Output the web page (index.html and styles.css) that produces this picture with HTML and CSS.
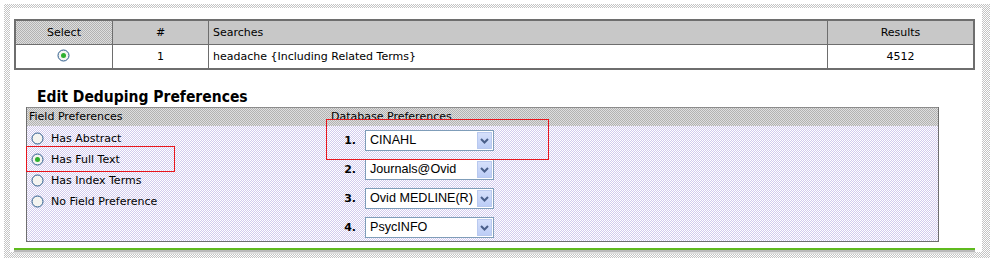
FILE: index.html
```html
<!DOCTYPE html>
<html lang="en">
<head>
  <meta charset="UTF-8">
  <title>Edit Deduping Preferences</title>
  <link rel="stylesheet" href="styles.css">
</head>
<body>
  <div class="page">
    <div class="panel">
      <table class="searches">
        <thead>
          <tr>
            <th class="col-select">Select</th>
            <th class="col-num">#</th>
            <th class="col-search">Searches</th>
            <th class="col-results">Results</th>
          </tr>
        </thead>
        <tbody>
          <tr>
            <td class="center">
              <svg class="radio" width="13" height="13" viewBox="0 0 13 13"><circle cx="6.5" cy="6.5" r="5.5" fill="#f4f4f0" stroke="#2a5a8c"/><circle cx="6.5" cy="6.5" r="2.5" fill="#2fb02f"/></svg>
            </td>
            <td class="center">1</td>
            <td>headache {Including Related Terms}</td>
            <td class="center">4512</td>
          </tr>
        </tbody>
      </table>

      <h2 class="title">Edit Deduping Preferences</h2>

      <div class="prefs">
        <div class="prefs-head">
          <span class="head-field">Field Preferences</span>
          <span class="head-db">Database Preferences</span>
        </div>
        <div class="prefs-body">
          <ul class="field-list">
            <li><svg class="radio" width="13" height="13" viewBox="0 0 13 13"><circle cx="6.5" cy="6.5" r="5.5" fill="#f4f4f0" stroke="#2a5a8c"/></svg>Has Abstract</li>
            <li><svg class="radio" width="13" height="13" viewBox="0 0 13 13"><circle cx="6.5" cy="6.5" r="5.5" fill="#f4f4f0" stroke="#2a5a8c"/><circle cx="6.5" cy="6.5" r="2.5" fill="#2fb02f"/></svg>Has Full Text</li>
            <li><svg class="radio" width="13" height="13" viewBox="0 0 13 13"><circle cx="6.5" cy="6.5" r="5.5" fill="#f4f4f0" stroke="#2a5a8c"/></svg>Has Index Terms</li>
            <li><svg class="radio" width="13" height="13" viewBox="0 0 13 13"><circle cx="6.5" cy="6.5" r="5.5" fill="#f4f4f0" stroke="#2a5a8c"/></svg>No Field Preference</li>
          </ul>
          <ol class="db-list">
            <li><span class="num">1.</span><div class="dd"><span class="dd-text">CINAHL</span><span class="dd-btn"><svg width="9" height="6" viewBox="0 0 9 6"><polyline points="1,1 4.5,4.5 8,1" fill="none" stroke="#4a5f8a" stroke-width="2"/></svg></span></div></li>
            <li><span class="num">2.</span><div class="dd"><span class="dd-text">Journals@Ovid</span><span class="dd-btn"><svg width="9" height="6" viewBox="0 0 9 6"><polyline points="1,1 4.5,4.5 8,1" fill="none" stroke="#4a5f8a" stroke-width="2"/></svg></span></div></li>
            <li><span class="num">3.</span><div class="dd"><span class="dd-text">Ovid MEDLINE(R)</span><span class="dd-btn"><svg width="9" height="6" viewBox="0 0 9 6"><polyline points="1,1 4.5,4.5 8,1" fill="none" stroke="#4a5f8a" stroke-width="2"/></svg></span></div></li>
            <li><span class="num">4.</span><div class="dd"><span class="dd-text">PsycINFO</span><span class="dd-btn"><svg width="9" height="6" viewBox="0 0 9 6"><polyline points="1,1 4.5,4.5 8,1" fill="none" stroke="#4a5f8a" stroke-width="2"/></svg></span></div></li>
          </ol>
        </div>
      </div>

      <div class="rule"></div>

      <div class="mark mark-field"></div>
      <div class="mark mark-db"></div>
    </div>
  </div>
</body>
</html>
```

FILE: styles.css
```css
:root {
  --ink: #000;
  --line: #6e6e6e;
  --gray-a: #b2b2b2;
  --gray-b: #dedede;
  --lav-a: #d2cbee;
  --lav-b: #ffffff;
  --mark: #e8161c;
}

body {
  margin: 0;
  background: #fff;
  font-family: "DejaVu Sans", Verdana, sans-serif;
  font-size: 11px;
  color: var(--ink);
}

.page {
  margin: 4px 0 0 4px;
  width: 986px;
  height: 254px;
  padding: 4px 0 0 6px;
  box-sizing: border-box;
  background: repeating-conic-gradient(#c4c4c4 0 25%, #fff 0 50%) 0 0 / 2px 2px;
}

.panel {
  position: relative;
  width: 972px;
  height: 244px;
  background: #fff;
  padding: 11px 0 0 4px;
  box-sizing: border-box;
}

/* searches table */
.searches {
  width: 961px;
  border-collapse: collapse;
  border: 2px solid var(--line);
}

.searches th,
.searches td {
  border: 1px solid var(--line);
  padding: 0 4px;
  text-align: left;
  font-weight: normal;
}

.searches th {
  height: 23px;
  text-align: center;
  background: repeating-conic-gradient(var(--gray-a) 0 25%, var(--gray-b) 0 50%) 0 0 / 2px 2px;
}

.searches th.col-search {
  text-align: left;
}

.searches td {
  height: 23px;
}

.col-select { width: 88px; }
.col-num { width: 87px; }
.col-results { width: 137px; }

.center {
  text-align: center !important;
}

.radio {
  display: block;
  flex: none;
}

.searches td .radio {
  display: inline-block;
  vertical-align: middle;
  margin: -3px 0 0 -1px;
}

/* heading */
.title {
  margin: 0;
  padding: 17px 0 0 23px;
  height: 20px;
  font-family: "DejaVu Sans Condensed", "DejaVu Sans", sans-serif;
  font-size: 15.5px;
  line-height: 20px;
  font-weight: bold;
}

/* preferences box */
.prefs {
  margin: 0 0 0 12px;
  width: 913px;
  height: 135px;
  box-sizing: border-box;
  border: 1px solid var(--line);
  border-top: none;
  background: repeating-conic-gradient(var(--lav-a) 0 25%, var(--lav-b) 0 50%) 0 0 / 2px 2px;
}

.prefs-head {
  display: flex;
  height: 18px;
  line-height: 18px;
  background: repeating-conic-gradient(var(--gray-a) 0 25%, var(--gray-b) 0 50%) 0 0 / 2px 2px;
  border-top: 1px solid #8c8c8c;
}

.head-field {
  width: 302px;
  padding-left: 2px;
}

.prefs-body {
  display: flex;
}

.field-list {
  list-style: none;
  margin: 2px 0 0;
  padding: 0 0 0 4px;
  width: 300px;
}

.field-list li {
  display: flex;
  align-items: center;
  gap: 7px;
  height: 21px;
}

.db-list {
  list-style: none;
  margin: 4px 0 0;
  padding: 0;
}

.db-list li {
  display: flex;
  align-items: center;
  height: 21px;
  margin-bottom: 8px;
}

.num {
  width: 25px;
  padding-right: 9px;
  text-align: right;
  font-weight: bold;
}

.dd {
  display: flex;
  width: 129px;
  height: 21px;
  box-sizing: border-box;
  border: 1px solid #7f9db9;
  background: #fff;
  font-family: "Liberation Sans", Arial, sans-serif;
  font-size: 12.6px;
}

.dd-text {
  flex: 1;
  padding-left: 4px;
  line-height: 19px;
  white-space: nowrap;
  overflow: hidden;
}

.dd-btn {
  display: flex;
  align-items: center;
  justify-content: center;
  width: 15px;
  margin: 1px 1px 1px 0;
  background: linear-gradient(#d6e0fb, #bccdf6);
  border: 1px solid #b9c9ef;
  box-sizing: border-box;
}

.rule {
  margin-top: 6px;
  width: 961px;
  height: 2px;
  background: #5fba1e;
  box-shadow: 0 2px 0 #b9b9b9, 0 4px 0 #dedede;
}

/* red annotation boxes */
.mark {
  position: absolute;
  border: 1px solid var(--mark);
  box-sizing: border-box;
}

.mark-field {
  left: 16px;
  top: 138px;
  width: 149px;
  height: 26px;
}

.mark-db {
  left: 316px;
  top: 111px;
  width: 223px;
  height: 41px;
}
```
